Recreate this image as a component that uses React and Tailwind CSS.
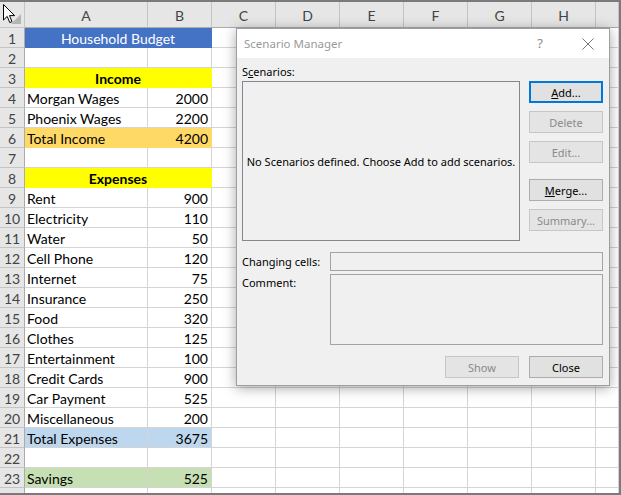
const cols = ["A", "B", "C", "D", "E", "F", "G", "H", ""];

const rows = [
  { a: "Household Budget", merged: true, fill: "bg-[#4472c4] border-[#4472c4]", color: "text-white" },
  {},
  { a: "Income", merged: true, fill: "bg-[#ffff00] border-[#ffff00]", bold: true },
  { a: "Morgan Wages", b: 2000 },
  { a: "Phoenix Wages", b: 2200 },
  { a: "Total Income", b: 4200, fill: "bg-[#ffd966] border-[#ffd966]" },
  {},
  { a: "Expenses", merged: true, fill: "bg-[#ffff00] border-[#ffff00]", bold: true },
  { a: "Rent", b: 900 },
  { a: "Electricity", b: 110 },
  { a: "Water", b: 50 },
  { a: "Cell Phone", b: 120 },
  { a: "Internet", b: 75 },
  { a: "Insurance", b: 250 },
  { a: "Food", b: 320 },
  { a: "Clothes", b: 125 },
  { a: "Entertainment", b: 100 },
  { a: "Credit Cards", b: 900 },
  { a: "Car Payment", b: 525 },
  { a: "Miscellaneous", b: 200 },
  { a: "Total Expenses", b: 3675, fill: "bg-[#bdd7ee] border-[#bdd7ee]" },
  {},
  { a: "Savings", b: 525, fill: "bg-[#c6e0b4] border-[#c6e0b4]" },
  { hideNum: true },
];

const cell = "border-r border-b border-[#d4d4d4] h-[20px]";
const head = "bg-[#e6e6e6] border-r border-b border-[#c4c4c4] text-[#444] flex items-center justify-center";

function Btn({ children, disabled, primary, className = "" }) {
  let look = "bg-[#e1e1e1] border border-[#adadad] text-black";
  if (disabled) look = "bg-[#e4e4e4] border border-[#c6c6c6] text-[#8a8a8a]";
  if (primary) look = "bg-[#e1e1e1] border-2 border-[#0078d7] text-black";
  return (
    <div className={`w-[74px] h-[22px] flex items-center justify-center ${look} ${className}`}>
      {children}
    </div>
  );
}

function Dialog() {
  return (
    <div className="absolute left-[236px] top-[26px] w-[374px] h-[358px] border border-[#9e9e9e] bg-[#f0f0f0] shadow-[0_2px_12px_rgba(0,0,0,0.35)] font-['Noto_Sans',sans-serif] text-[11px] leading-[17px] text-black">
      {/* title bar */}
      <div className="h-[29px] bg-white flex items-center pl-[7px] pr-[15px] text-[11.5px] text-[#9a9a9a]">
        <span>Scenario Manager</span>
        <span className="ml-auto mr-[39px] text-[#8a8a8a] text-[13px]">?</span>
        <svg width="12" height="12" viewBox="0 0 12 12" className="stroke-[#777]">
          <path d="M0.5 0.5 L11.5 11.5 M11.5 0.5 L0.5 11.5" strokeWidth="1" />
        </svg>
      </div>

      <div className="pl-[5px] pr-[6px]">
        <div className="h-[23px] pt-[5px]">
          S<span className="underline">c</span>enarios:
        </div>

        <div className="flex">
          <div className="w-[278px] h-[160px] border border-[#828790] flex items-center justify-center">
            No Scenarios defined. Choose Add to add scenarios.
          </div>
          <div className="ml-[9px] flex flex-col">
            <Btn primary>
              <span className="underline">A</span>dd...
            </Btn>
            <Btn disabled className="mt-[8px]">Delete</Btn>
            <Btn disabled className="mt-[8px]">Edit...</Btn>
            <Btn className="mt-[16px]">
              <span className="underline">M</span>erge...
            </Btn>
            <Btn disabled className="mt-[8px]">Summary...</Btn>
          </div>
        </div>

        <div className="mt-[11px] flex items-center h-[19px]">
          <div className="w-[88px]">Changing cells:</div>
          <div className="w-[274px] h-[19px] border border-[#a3a3a3]" />
        </div>

        <div className="mt-[3px] flex">
          <div className="w-[88px]">Comment:</div>
          <div className="w-[274px] h-[71px] border border-[#a3a3a3]" />
        </div>

        <div className="mt-[11px] flex justify-end gap-[10px]">
          <Btn disabled>Show</Btn>
          <Btn>Close</Btn>
        </div>
      </div>
    </div>
  );
}

export default function App() {
  return (
    <div className="relative w-[621px] h-[495px] border-t-2 border-r-2 border-b-2 border-[#7a7a7a] overflow-hidden bg-white font-['Lato',sans-serif] text-[14px] text-black">
      <div className="grid grid-cols-[25px_123px_64px_64px_64px_64px_64px_64px_64px_1fr]">
        {/* column headers */}
        <div className={`${head} h-[26px] relative border-[#ababab]`}>
          <svg width="10" height="10" viewBox="0 0 10 10" className="absolute right-[3px] bottom-[3px]">
            <path d="M10 0 L10 10 L0 10 Z" fill="#b4b4b4" />
          </svg>
        </div>
        {cols.map((c, i) => (
          <div key={i} className={`${head} h-[26px] pt-[2px] border-b-[#ababab]`}>
            {c}
          </div>
        ))}

        {rows.map((r, i) => (
          <Row key={i} n={i + 1} r={r} />
        ))}
      </div>

      {/* mouse pointer */}
      <svg width="13" height="20" viewBox="0 0 13 20" className="absolute left-[3px] top-[2px]">
        <path
          d="M0.5 0.5 L0.5 16 L4.2 12.4 L6.8 18.6 L9 17.6 L6.5 11.6 L11.6 11.6 Z"
          fill="white"
          stroke="black"
          strokeWidth="1"
          strokeLinejoin="miter"
        />
      </svg>

      <Dialog />
    </div>
  );
}

function Row({ n, r }) {
  const fill = r.fill || "bg-white border-[#d4d4d4]";
  return (
    <>
      <div className={`${head} h-[20px] pt-[2px] border-r-[#ababab]`}>{r.hideNum ? "" : n}</div>
      {r.merged ? (
        <div
          className={`col-span-2 border-r border-b h-[20px] pt-[2px] flex items-center justify-center ${fill} ${r.color || ""} ${r.bold ? "font-bold" : ""}`}
        >
          {r.a}
        </div>
      ) : (
        <>
          <div className={`${cell} ${fill} flex items-center pt-[2px] pl-[2px] whitespace-nowrap`}>{r.a}</div>
          <div className={`${cell} ${fill} flex items-center justify-end pt-[2px] pr-[3px]`}>{r.b}</div>
        </>
      )}
      {[0, 1, 2, 3, 4, 5, 6].map((k) => (
        <div key={k} className={cell} />
      ))}
    </>
  );
}
